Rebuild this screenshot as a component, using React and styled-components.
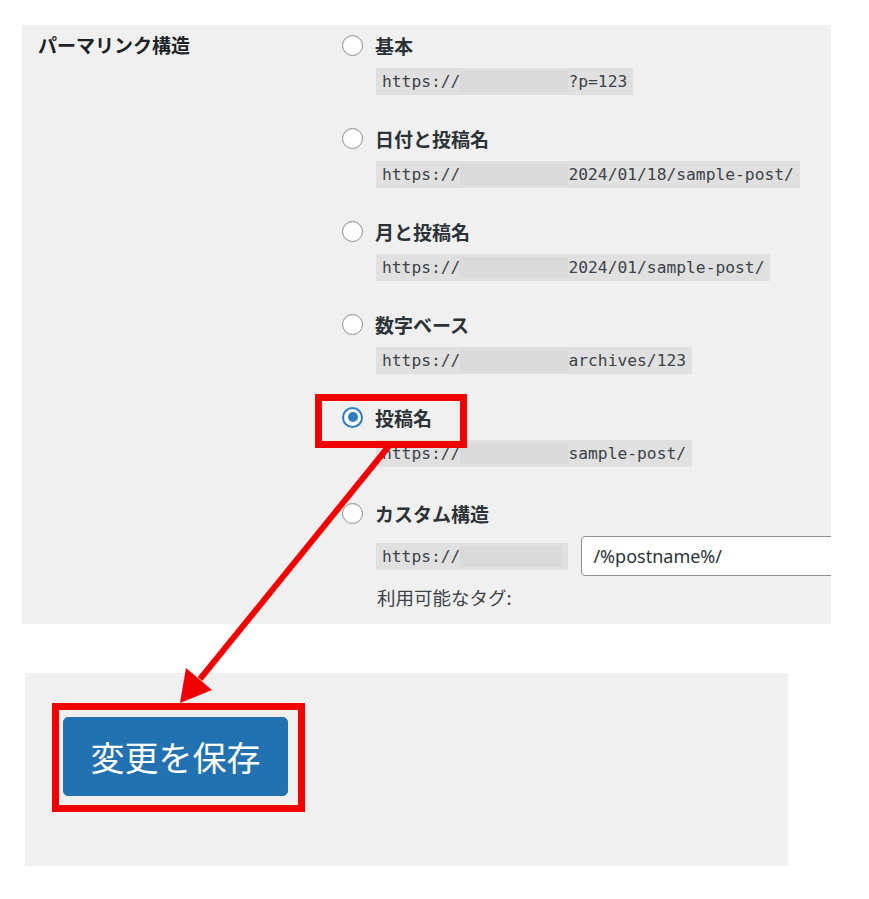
import React from "react";
import styled, { createGlobalStyle } from "styled-components";

const GlobalStyle = createGlobalStyle`
  body {
    margin: 0;
    background: #ffffff;
    font-family: "Noto Sans CJK JP", "Noto Sans", sans-serif;
    color: #1d2327;
  }
`;

const Page = styled.div`
  position: relative;
  width: 869px;
  min-height: 899px;
  overflow: hidden;
`;

const SettingsPanel = styled.section`
  margin: 25px 0 0 22px;
  width: 809px;
  height: 599px;
  box-sizing: border-box;
  padding-top: 6px;
  background: #f0f0f0;
  display: grid;
  grid-template-columns: 320px 1fr;
  overflow: hidden;
`;

const FieldLabel = styled.div`
  padding-left: 16px;
  font-size: 19px;
  font-weight: 700;
  line-height: 28px;
  color: #1d2327;
`;

const OptionList = styled.div`
  display: flex;
  flex-direction: column;
  gap: 29px;
`;

const Option = styled.div`
  display: flex;
  flex-direction: column;
  gap: 9px;
  margin-top: ${(p) => (p.$custom ? "3px" : "0")};
`;

const OptionLabel = styled.label`
  display: flex;
  align-items: center;
  gap: 12px;
  height: 28px;
  font-size: 19px;
  font-weight: 700;
  color: #2c3338;
`;

const Radio = styled.span`
  box-sizing: border-box;
  width: 21px;
  height: 21px;
  border-radius: 50%;
  background: #ffffff;
  border: ${(p) => (p.$checked ? "2px solid #2f7cc0" : "1px solid #8c8f94")};
  box-shadow: inset 0 1px 2px rgba(0, 0, 0, 0.08);
  display: flex;
  align-items: center;
  justify-content: center;
  &::after {
    content: "";
    display: ${(p) => (p.$checked ? "block" : "none")};
    width: 10px;
    height: 10px;
    border-radius: 50%;
    background: #2f7cc0;
  }
`;

const CodeRow = styled.div`
  display: flex;
  align-items: center;
  gap: 13px;
  padding-left: 34px;
`;

const Code = styled.code`
  display: inline-flex;
  align-items: center;
  height: 27px;
  padding: 0 6px;
  background: #e0e0e0;
  font-family: "DejaVu Sans Mono", "Liberation Mono", monospace;
  font-size: 16.3px;
  color: #3c434a;
  white-space: pre;
`;

const Redacted = styled.span`
  display: inline-block;
  width: ${(p) => p.$w || 108}px;
  height: 21px;
  background: #dadada;
`;

const SlugInput = styled.input`
  box-sizing: border-box;
  width: 420px;
  height: 40px;
  padding: 0 11px;
  border: 1px solid #8c8f94;
  border-radius: 4px;
  background: #ffffff;
  font-family: "Noto Sans", sans-serif;
  font-size: 18px;
  color: #2c3338;
  outline: none;
`;

const TagsNote = styled.p`
  margin: 0;
  padding-left: 35px;
  font-size: 18.5px;
  line-height: 24px;
  color: #3c434a;
`;

const SubmitPanel = styled.section`
  margin: 49px 0 0 25px;
  width: 763px;
  height: 193px;
  box-sizing: border-box;
  padding: 44px 0 0 38px;
  background: #f0f0f0;
`;

const SaveButton = styled.button`
  width: 225px;
  height: 79px;
  border: 1px solid #2271b1;
  border-radius: 5px;
  background: #2271b1;
  color: #ffffff;
  font-family: "Noto Sans CJK JP", sans-serif;
  font-size: 34px;
  font-weight: 400;
  cursor: pointer;
`;

const Highlight = styled.div`
  position: absolute;
  box-sizing: border-box;
  border: 7px solid #f00000;
  pointer-events: none;
`;

const ArrowLayer = styled.svg`
  position: absolute;
  left: 0;
  top: 0;
  pointer-events: none;
`;

const options = [
  { label: "基本", rest: "?p=123" },
  { label: "日付と投稿名", rest: "2024/01/18/sample-post/" },
  { label: "月と投稿名", rest: "2024/01/sample-post/" },
  { label: "数字ベース", rest: "archives/123" },
  { label: "投稿名", rest: "sample-post/", checked: true },
];

export default function App() {
  return (
    <Page>
      <GlobalStyle />
      <SettingsPanel>
        <FieldLabel>パーマリンク構造</FieldLabel>
        <OptionList>
          {options.map((o) => (
            <Option key={o.label}>
              <OptionLabel>
                <Radio $checked={o.checked} />
                {o.label}
              </OptionLabel>
              <CodeRow>
                <Code>
                  https://
                  <Redacted />
                  {o.rest}
                </Code>
              </CodeRow>
            </Option>
          ))}
          <Option $custom>
            <OptionLabel>
              <Radio />
              カスタム構造
            </OptionLabel>
            <CodeRow>
              <Code>
                https://
                <Redacted $w={102} />
              </Code>
              <SlugInput defaultValue="/%postname%/" />
            </CodeRow>
            <TagsNote>利用可能なタグ:</TagsNote>
          </Option>
        </OptionList>
      </SettingsPanel>

      <SubmitPanel>
        <SaveButton>変更を保存</SaveButton>
      </SubmitPanel>

      <Highlight style={{ left: 315, top: 394, width: 152, height: 54 }} />
      <Highlight style={{ left: 52, top: 703, width: 253, height: 109 }} />

      <ArrowLayer width="869" height="899" viewBox="0 0 869 899">
        <line x1="389" y1="446" x2="200" y2="679" stroke="#f00000" strokeWidth="6" />
        <polygon points="180,703 186,668 212,690" fill="#f00000" />
      </ArrowLayer>
    </Page>
  );
}
